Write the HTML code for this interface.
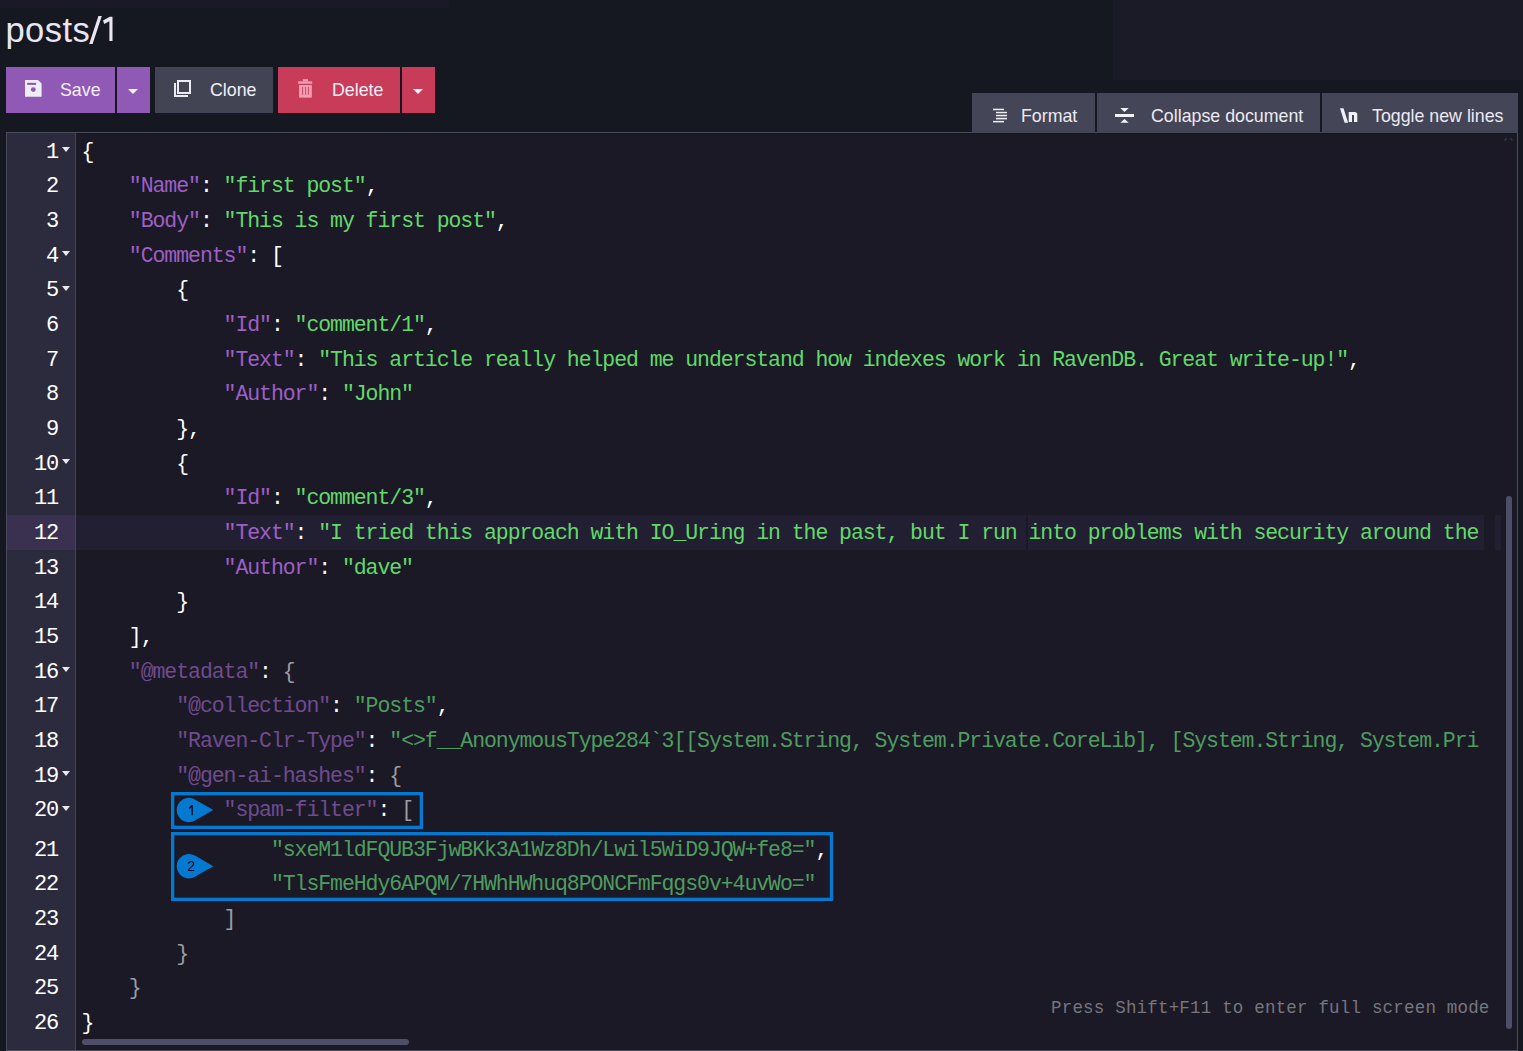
<!DOCTYPE html>
<html><head><meta charset="utf-8">
<style>
*{box-sizing:border-box;margin:0;padding:0}
html,body{width:1523px;height:1051px;overflow:hidden;background:#161821}
body{position:relative;font-family:"Liberation Sans",sans-serif;color:#e9e7f1}
.abs{position:absolute}
.title{position:absolute;left:5.4px;top:10px;font-size:34.5px;line-height:40px;color:#e9e6f2;letter-spacing:0.475px}
.btn{position:absolute;top:67px;height:46px;color:#f1eff7;font-size:17.8px;line-height:46px}
.btn .lbl{position:absolute;top:0}
.caret{position:absolute;width:0;height:0;border-left:5px solid transparent;border-right:5px solid transparent;border-top:5px solid #f1eff7}
.tb{position:absolute;top:93px;height:40px;background:#444556;color:#eceaf3;font-size:17.8px;line-height:40px}
.tb .lbl{position:absolute;top:3px}
.editor{position:absolute;left:6px;top:132px;width:1512px;height:919px;border:1px solid #4b4b5c;background:#1a1925;overflow:hidden}
.gutter{position:absolute;left:7px;top:133px;width:69px;height:917px;background:#2b2b3d;border-right:1px solid #45455a}
.ln{position:absolute;left:81.5px;height:34.67px;line-height:34.67px;font-family:"Liberation Mono",monospace;font-size:21.5px;letter-spacing:-1.065px;white-space:pre;color:#fff}
.gn{position:absolute;left:7px;width:51px;text-align:right;height:34.67px;line-height:34.67px;font-family:"Liberation Mono",monospace;font-size:22px;letter-spacing:-1.2px;color:#fff}
.fold{position:absolute;left:62px;width:0;height:0;border-left:4px solid transparent;border-right:4px solid transparent;border-top:5px solid #e8e8ee}
.k{color:#9e5fc7}
.s{color:#62d96b}
.p{color:#ffffff}
.mk{color:#6f4b8f}
.ms{color:#4f9c60}
.g{color:#9c9ca4}
</style></head><body>
<div class="abs" style="left:0;top:0;width:449px;height:8px;background:#1a1926"></div>
<div class="abs" style="left:1113px;top:0;width:410px;height:80px;background:#1b1b28"></div>
<div class="title">posts</div>
<svg class="abs" style="left:0;top:0" width="130" height="60" viewBox="0 0 130 60" fill="#e9e6f2"><path d="M98.4 15.9H101.8L92.6 43.9H89.2Z"/><path d="M103 20.4L109.8 16.8H112.5V41H109.4V21.2L104.2 23.9Z"/></svg>

<div class="btn" style="left:6px;width:109px;background:#9059b6">
  <svg class="abs" style="left:19px;top:13px" width="18" height="18" viewBox="0 0 18 18"><path d="M0 0h13l3.6 3.6V16.7H0z" fill="#efedf5"/><rect x="2.1" y="2.8" width="9" height="2.1" fill="#9059b6"/><circle cx="8.3" cy="9.6" r="2.4" fill="#9059b6"/></svg>
  <span class="lbl" style="left:54px">Save</span>
</div>
<div class="btn" style="left:117px;width:33px;background:#9059b6"><div class="caret" style="left:11px;top:22px"></div></div>
<div class="btn" style="left:155px;width:118px;background:#434453">
  <svg class="abs" style="left:19px;top:13px" width="18" height="18" viewBox="0 0 18 18" fill="none" stroke="#eceaf3" stroke-width="2"><rect x="4" y="1" width="12" height="12"/><path d="M1 3V16H14"/></svg>
  <span class="lbl" style="left:55px">Clone</span>
</div>
<div class="btn" style="left:278px;width:122px;background:#c83c5a">
  <svg class="abs" style="left:19px;top:11px" width="18" height="21" viewBox="0 0 18 21"><rect x="5.9" y="1.1" width="5.1" height="2.3" fill="#f3a0b4"/><rect x="1.1" y="3.4" width="14.1" height="2.3" fill="#f3a0b4"/><rect x="2.1" y="7" width="12.7" height="12.6" fill="#f3a0b4"/><rect x="5" y="8.9" width="1.1" height="8" fill="#d2506e"/><rect x="8" y="8.9" width="1.1" height="8" fill="#d2506e"/><rect x="10.9" y="8.9" width="1.1" height="8" fill="#d2506e"/></svg>
  <span class="lbl" style="left:54px">Delete</span>
</div>
<div class="btn" style="left:402px;width:33px;background:#c83c5a"><div class="caret" style="left:11px;top:22px"></div></div>

<div class="editor"></div>
<div class="abs" style="left:7px;top:133px;width:1510px;height:1px;background:#16151f"></div>
<div class="tb" style="left:972px;width:123px">
  <svg class="abs" style="left:20px;top:14px" width="17" height="17" viewBox="0 0 17 17" fill="#eeecf4"><rect x="1" y="1.7" width="11" height="1.5"/><rect x="4" y="4.8" width="11" height="1.5"/><rect x="4" y="7.9" width="11" height="1.5"/><rect x="4" y="10.9" width="11" height="1.5"/><rect x="1" y="13.9" width="11" height="1.5"/><rect x="4" y="6.3" width="11" height="1.6" fill="#6e6e7c"/><rect x="4" y="9.4" width="11" height="1.5" fill="#6e6e7c"/></svg>
  <span class="lbl" style="left:49px">Format</span>
</div>
<div class="tb" style="left:1097px;width:223px">
  <svg class="abs" style="left:18px;top:14px" width="20" height="18" viewBox="0 0 20 18" fill="#f3f1f8"><rect x="0" y="7" width="19" height="3"/><path d="M5.3 1.1H13.7L9.5 4.9Z"/><path d="M5.3 15.7H13.7L9.5 11.9Z"/></svg>
  <span class="lbl" style="left:54px">Collapse document</span>
</div>
<div class="tb" style="left:1322px;width:196px">
  <svg class="abs" style="left:18px;top:15px" width="20" height="17" viewBox="0 0 20 17" fill="#f1eff7"><path d="M0 0.3H3.5L8.1 14.8H4.6Z"/><path d="M8.7 4H14.8Q17.3 4 17.3 6.5V14H14V7H12V14H8.7Z"/></svg>
  <span class="lbl" style="left:50px">Toggle new lines</span>
</div>

<div class="gutter"></div>
<div class="abs" style="left:76px;top:514.97px;width:950px;height:34.67px;background:#221f32"></div>
<div class="abs" style="left:1028px;top:514.97px;width:456px;height:34.67px;background:#221f32"></div>
<div class="abs" style="left:1494.5px;top:514.97px;width:6px;height:34.67px;background:#221f32"></div>
<div class="abs" style="left:7px;top:514.97px;width:68px;height:34.67px;background:#3a3050"></div>
<div class="gn" style="top:135.60px">1</div><div class="fold" style="top:147.00px"></div><div class="gn" style="top:170.27px">2</div><div class="gn" style="top:204.94px">3</div><div class="gn" style="top:239.61px">4</div><div class="fold" style="top:251.01px"></div><div class="gn" style="top:274.28px">5</div><div class="fold" style="top:285.68px"></div><div class="gn" style="top:308.95px">6</div><div class="gn" style="top:343.62px">7</div><div class="gn" style="top:378.29px">8</div><div class="gn" style="top:412.96px">9</div><div class="gn" style="top:447.63px">10</div><div class="fold" style="top:459.03px"></div><div class="gn" style="top:482.30px">11</div><div class="gn" style="top:516.97px">12</div><div class="gn" style="top:551.64px">13</div><div class="gn" style="top:586.31px">14</div><div class="gn" style="top:620.98px">15</div><div class="gn" style="top:655.65px">16</div><div class="fold" style="top:667.05px"></div><div class="gn" style="top:690.32px">17</div><div class="gn" style="top:724.99px">18</div><div class="gn" style="top:759.66px">19</div><div class="fold" style="top:771.06px"></div><div class="gn" style="top:794.33px">20</div><div class="fold" style="top:805.73px"></div><div class="gn" style="top:833.50px">21</div><div class="gn" style="top:868.17px">22</div><div class="gn" style="top:902.84px">23</div><div class="gn" style="top:937.51px">24</div><div class="gn" style="top:972.18px">25</div><div class="gn" style="top:1006.85px">26</div>
<div class="ln" style="top:134.60px"><span class="p">{</span></div><div class="ln" style="top:169.27px">    <span class="k">"Name"</span><span class="p">: </span><span class="s">"first post"</span><span class="p">,</span></div><div class="ln" style="top:203.94px">    <span class="k">"Body"</span><span class="p">: </span><span class="s">"This is my first post"</span><span class="p">,</span></div><div class="ln" style="top:238.61px">    <span class="k">"Comments"</span><span class="p">: [</span></div><div class="ln" style="top:273.28px">        <span class="p">{</span></div><div class="ln" style="top:307.95px">            <span class="k">"Id"</span><span class="p">: </span><span class="s">"comment/1"</span><span class="p">,</span></div><div class="ln" style="top:342.62px">            <span class="k">"Text"</span><span class="p">: </span><span class="s">"This article really helped me understand how indexes work in RavenDB. Great write-up!"</span><span class="p">,</span></div><div class="ln" style="top:377.29px">            <span class="k">"Author"</span><span class="p">: </span><span class="s">"John"</span></div><div class="ln" style="top:411.96px">        <span class="p">},</span></div><div class="ln" style="top:446.63px">        <span class="p">{</span></div><div class="ln" style="top:481.30px">            <span class="k">"Id"</span><span class="p">: </span><span class="s">"comment/3"</span><span class="p">,</span></div><div class="ln" style="top:515.97px">            <span class="k">"Text"</span><span class="p">: </span><span class="s">"I tried this approach with IO_Uring in the past, but I run into problems with security around the</span></div><div class="ln" style="top:550.64px">            <span class="k">"Author"</span><span class="p">: </span><span class="s">"dave"</span></div><div class="ln" style="top:585.31px">        <span class="p">}</span></div><div class="ln" style="top:619.98px">    <span class="p">],</span></div><div class="ln" style="top:654.65px">    <span class="mk">"@metadata"</span><span class="p">: </span><span class="g">{</span></div><div class="ln" style="top:689.32px">        <span class="mk">"@collection"</span><span class="p">: </span><span class="ms">"Posts"</span><span class="p">,</span></div><div class="ln" style="top:723.99px">        <span class="mk">"Raven-Clr-Type"</span><span class="p">: </span><span class="ms">"&lt;&gt;f__AnonymousType284`3[[System.String, System.Private.CoreLib], [System.String, System.Pri</span></div><div class="ln" style="top:758.66px">        <span class="mk">"@gen-ai-hashes"</span><span class="p">: </span><span class="g">{</span></div><div class="ln" style="top:793.33px">            <span class="mk">"spam-filter"</span><span class="p">: </span><span class="g">[</span></div><div class="ln" style="top:832.50px">                <span class="ms">"sxeM1ldFQUB3FjwBKk3A1Wz8Dh/Lwil5WiD9JQW+fe8="</span><span class="p">,</span></div><div class="ln" style="top:867.17px">                <span class="ms">"TlsFmeHdy6APQM/7HWhHWhuq8PONCFmFqgs0v+4uvWo="</span></div><div class="ln" style="top:901.84px">            <span class="g">]</span></div><div class="ln" style="top:936.51px">        <span class="g">}</span></div><div class="ln" style="top:971.18px">    <span class="g">}</span></div><div class="ln" style="top:1005.85px"><span class="p">}</span></div>

<svg class="abs" style="left:0;top:0" width="1523" height="1051" viewBox="0 0 1523 1051">
<rect x="172.65" y="793.65" width="248.7" height="33.7" fill="none" stroke="#0479d2" stroke-width="3.3"/>
<rect x="172.65" y="833.65" width="658.8" height="65.7" fill="none" stroke="#0479d2" stroke-width="3.3"/>
<path d="M194.9 799.4 L213.3 810 L194.9 820.6 A12.2 12.2 0 1 1 194.9 799.4 Z" fill="#0479d2"/>
<path d="M194.9 855.6 L213.3 866.2 L194.9 876.8 A12.2 12.2 0 1 1 194.9 855.6 Z" fill="#0479d2"/>
<path d="M188.9 807.4L191.6 805H192.8V815.2H191.5V807.4L189.6 808.9Z" fill="#000a1a"/>
<text x="191.2" y="871" style="font-family:'Liberation Sans';font-size:14px" fill="#000a1a" text-anchor="middle">2</text>
</svg>

<div class="abs" style="left:1051px;top:993.5px;font-family:'Liberation Mono',monospace;font-size:17.5px;line-height:28px;letter-spacing:0.195px;color:#77767f;white-space:pre">Press Shift+F11 to enter full screen mode</div>

<svg class="abs" style="left:1503px;top:135px" width="12" height="8" viewBox="0 0 12 8" stroke="#3a3a4e" stroke-width="1.3" fill="none"><path d="M1.5 5.5L3.5 3.5M7.5 3.5L9.5 5.5"/></svg>
<div class="abs" style="left:1506px;top:496px;width:6px;height:533px;border-radius:3px;background:#4f4e68"></div>
<div class="abs" style="left:82px;top:1039px;width:327px;height:6px;border-radius:3px;background:#4f4e68"></div>
</body></html>
